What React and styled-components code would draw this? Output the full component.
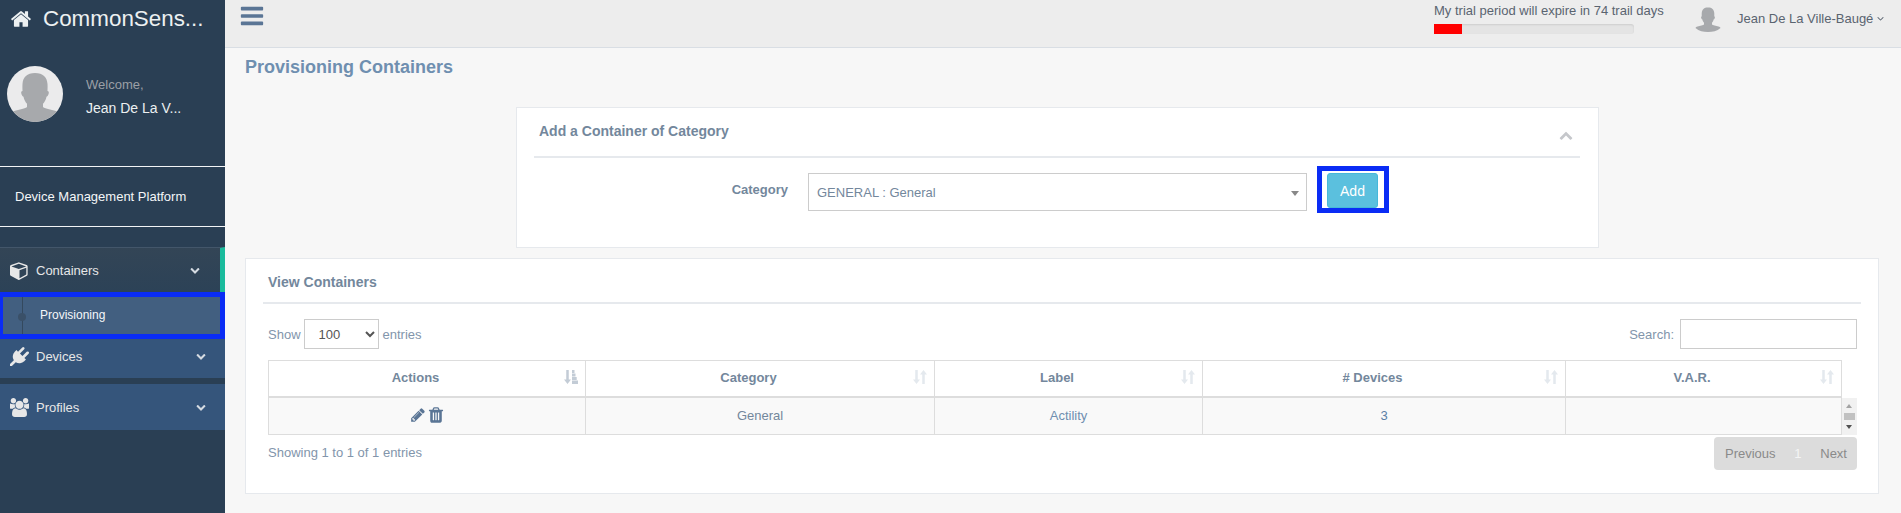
import React from "react";
import styled, { createGlobalStyle } from "styled-components";

const PATHS = {
  home: "M1472 992v480q0 26-19 45t-45 19h-384v-384h-256v384h-384q-26 0-45-19t-19-45v-480q0-1 .5-3t.5-3l575-474 575 474q1 2 1 6zm223-69l-62 74q-8 9-21 11h-3q-13 0-21-7l-692-577-692 577q-12 8-24 7-13-2-21-11l-62-74q-8-10-7-23.5t11-21.5l719-599q32-26 76-26t76 26l244 204v-195q0-14 9-23t23-9h192q14 0 23 9t9 23v408l219 182q10 8 11 21.5t-7 23.5z",
  cube: "M896 1629l640-349v-636l-640 233v752zm-64-865l698-254-698-254-698 254zm832-252v768q0 35-18 65t-49 47l-704 384q-28 16-61 16t-61-16l-704-384q-31-17-49-47t-18-65v-768q0-40 23-73t61-50l704-256q22-8 44-8t44 8l704 256q38 17 61 50t23 73z",
  plug: "M1755 453q37 38 37 90.5t-37 90.5l-401 400 150 150-160 160q-163 163-389.5 186.5t-411.5-100.5l-362 362h-181v-181l362-362q-124-185-100.5-411.5t186.5-389.5l160-160 150 150 400-401q38-37 91-37t90 37 37 90.5-37 90.5l-400 401 234 234 401-400q38-37 91-37t90 37z",
  users: "M529 896q-162 5-265 128h-134q-82 0-138-40.5t-56-118.5q0-353 124-353 6 0 43.5 21t97.5 42.5 119 21.5q67 0 133-23-5 37-5 66 0 139 81 256zm1071 637q0 120-73 189.5t-194 69.5h-874q-121 0-194-69.5t-73-189.5q0-53 3.5-103.5t14-109 26.5-108.5 43-97.5 62-81 85.5-53.5 111.5-20q10 0 43 21.5t73 48 107 48 135 21.5 135-21.5 107-48 73-48 43-21.5q61 0 111.5 20t85.5 53.5 62 81 43 97.5 26.5 108.5 14 109 3.5 103.5zm-1024-1277q0 106-75 181t-181 75-181-75-75-181 75-181 181-75 181 75 75 181zm704 384q0 159-112.5 271.5t-271.5 112.5-271.5-112.5-112.5-271.5 112.5-271.5 271.5-112.5 271.5 112.5 112.5 271.5zm576 225q0 78-56 118.5t-138 40.5h-134q-103-123-265-128 81-117 81-256 0-29-5-66 66 23 133 23 59 0 119-21.5t97.5-42.5 43.5-21q124 0 124 353zm-128-609q0 106-75 181t-181 75-181-75-75-181 75-181 181-75 181 75 75 181z",
  pencil: "M491 1536l91-91-235-235-91 91v107h128v128h107zm523-928q0-22-22-22-10 0-17 7l-542 542q-7 7-7 17 0 22 22 22 10 0 17-7l542-542q7-7 7-17zm-54-192l416 416-832 832h-416v-416zm683 96q0 53-37 90l-166 166-416-416 166-165q36-38 90-38 53 0 91 38l235 234q37 39 37 91z",
  trash: "M704 1376v-704q0-14-9-23t-23-9h-64q-14 0-23 9t-9 23v704q0 14 9 23t23 9h64q14 0 23-9t9-23zm256 0v-704q0-14-9-23t-23-9h-64q-14 0-23 9t-9 23v704q0 14 9 23t23 9h64q14 0 23-9t9-23zm256 0v-704q0-14-9-23t-23-9h-64q-14 0-23 9t-9 23v704q0 14 9 23t23 9h64q14 0 23-9t9-23zm-544-992h448l-48-117q-7-9-17-11h-317q-10 2-17 11zm928 32v64q0 14-9 23t-23 9h-96v948q0 83-47 143.5t-113 60.5h-832q-66 0-113-58.5t-47-141.5v-952h-96q-14 0-23-9t-9-23v-64q0-14 9-23t23-9h309l70-167q15-37 54-63t79-26h320q40 0 79 26t54 63l70 167h309q14 0 23 9t9 23z",
  bars: "M1664 1344v128q0 26-19 45t-45 19h-1408q-26 0-45-19t-19-45v-128q0-26 19-45t45-19h1408q26 0 45 19t19 45zm0-512v128q0 26-19 45t-45 19h-1408q-26 0-45-19t-19-45v-128q0-26 19-45t45-19h1408q26 0 45 19t19 45zm0-512v128q0 26-19 45t-45 19h-1408q-26 0-45-19t-19-45v-128q0-26 19-45t45-19h1408q26 0 45 19t19 45z",
  chevronDown: "M1683 808l-742 741q-19 19-45 19t-45-19l-742-741q-19-19-19-45.5t19-45.5l166-165q19-19 45-19t45 19l531 531 531-531q19-19 45-19t45 19l166 165q19 19 19 45.5t-19 45.5z",
  chevronUp: "M1683 1331l-166 165q-19 19-45 19t-45-19l-531-530-531 530q-19 19-45 19t-45-19l-166-165q-19-19-19-45.5t19-45.5l742-741q19-19 45-19t45 19l742 741q19 19 19 45.5t-19 45.5z",
  angleDown: "M1395 736q0 13-10 23l-466 466q-10 10-23 10t-23-10l-466-466q-10-10-10-23t10-23l50-50q10-10 23-10t23 10l393 393 393-393q10-10 23-10t23 10l50 50q10 10 10 23z",
};

const FaIcon = ({ name, size, color }) => (
  <svg width={size} height={size} viewBox="0 0 1792 1792" fill={color} style={{ display: "block", flex: "none" }}>
    <path d={PATHS[name]} />
  </svg>
);

const Silhouette = ({ size, round }) => (
  <svg
    width={size}
    height={size}
    viewBox="0 0 56 56"
    style={{ display: "block", flex: "none", borderRadius: round ? "50%" : 0, background: round ? "#ebebec" : "none" }}
  >
    <path
      fill="#a7a9ac"
      d="M28 7C20 7 16 11 15.500 18C15.300 21 15.500 23 15.500 25C14.300 25 14 26 14.300 27.500C14.600 29 15.300 30.500 16.500 30.700C17.100 33.700 18.500 36.200 20 37.700V41C19 42.500 12 43.500 7 45C5 45.600 3.500 46.700 3 48C10 54 18.500 56 28 56C37.500 56 46 54 53 48C52.500 46.700 51 45.600 49 45C44 43.500 37 42.500 36 41V37.700C37.500 36.200 38.900 33.700 39.500 30.700C40.700 30.500 41.400 29 41.700 27.500C42 26 41.700 25 40.500 25C40.500 23 40.700 21 40.500 18C40 11 36 7 28 7z"
    />
  </svg>
);

// sort arrows of the table header, "amount" is the sorted variant
const SortIcon = ({ amount }) => (
  <svg width="14" height="14" viewBox="0 0 14 14" fill={amount ? "#c3ccd6" : "#e4e9ee"} style={{ display: "block", flex: "none" }}>
    <path d="M2.250 0h2.500v9.500H7L3.500 14 0 9.500h2.250z" />
    {amount ? (
      <path d="M8 0h2.500v3H8zM8 3.500h3.500v3H8zM8 7h4.700v3H8zM8 10.500h6V14H8z" />
    ) : (
      <path d="M9.250 14h2.500V4.500H14L10.500 0 7 4.500h2.250z" />
    )}
  </svg>
);

const GlobalStyle = createGlobalStyle`
  html, body {
    margin: 0;
    height: 513px;
    overflow: hidden;
    background: #f7f7f7;
  }
  * {
    box-sizing: border-box;
  }
`;

const Shell = styled.div`
  display: flex;
  width: 1901px;
  height: 513px;
  font-family: "Liberation Sans", Arial, sans-serif;
  font-size: 13px;
  color: #73879c;
`;

/* Sidebar */

const Sidebar = styled.aside`
  width: 225px;
  flex: none;
  background: #2a3f54;
  color: #ecf0f1;
`;

const Brand = styled.div`
  height: 37px;
  padding-left: 10px;
  display: flex;
  align-items: center;
  gap: 11px;
  font-size: 22.400px;
  color: #ecf0f1;
`;

const Profile = styled.div`
  margin-top: 29px;
  padding-left: 7px;
  display: flex;
  align-items: center;
  gap: 23px;
`;

const ProfileText = styled.div`
  margin-top: 4px;
`;

const Welcome = styled.div`
  font-size: 13px;
  color: #9b9fa6;
  margin-bottom: 8px;
`;

const ProfileName = styled.div`
  font-size: 14px;
  line-height: 16px;
  color: #ecf0f1;
`;

const PlatformLabel = styled.div`
  margin-top: 44px;
  height: 61px;
  padding-left: 15px;
  display: flex;
  align-items: center;
  border-top: 1px solid #f2f4f6;
  border-bottom: 1px solid #f2f4f6;
  font-size: 13px;
  color: #f4f6f8;
`;

const Menu = styled.nav`
  margin-top: 20px;
  display: flex;
  flex-direction: column;
`;

const MenuRow = styled.div`
  display: flex;
  align-items: center;
  height: ${(p) => p.$height}px;
  margin-bottom: ${(p) => p.$gap || 0}px;
  padding: 0 ${(p) => (p.$active ? 20 : 19)}px ${(p) => p.$lift || 0}px 10px;
  background: ${(p) => (p.$active ? "linear-gradient(#334556, #2c4257)" : "#35557b")};
  border-top: ${(p) => (p.$active ? "1px solid #43566a" : "none")};
  border-right: ${(p) => (p.$active ? "5px solid #1abb9c" : "none")};
  color: #e7e7e7;
  font-size: 13px;
`;

const MenuLabel = styled.span`
  flex: 1;
  margin-left: 7px;
`;

const SubRow = styled.div`
  position: relative;
  height: 47px;
  padding: 0 0 2px 37px;
  display: flex;
  align-items: center;
  background: #425f80;
  border: solid #0a2cf5;
  border-width: 5px 5px 5px 3px;
  font-size: 12px;
  color: #f5f7fa;
`;

const SubLine = styled.span`
  position: absolute;
  left: 19px;
  top: 0;
  bottom: 0;
  width: 1px;
  background: #34495e;
`;

const SubDot = styled.span`
  position: absolute;
  left: 15px;
  top: 16px;
  width: 8px;
  height: 8px;
  border-radius: 50%;
  background: #3a5068;
`;

/* Top bar */

const Main = styled.main`
  flex: 1;
  min-width: 0;
  display: flex;
  flex-direction: column;
`;

const TopBar = styled.header`
  height: 48px;
  flex: none;
  padding-left: 14px;
  display: flex;
  background: #ededed;
  border-bottom: 1px solid #d9dee4;
`;

const MenuToggle = styled.div`
  margin-top: 3px;
  height: 28px;
`;

const Trial = styled.div`
  margin-left: 1169px;
  margin-top: 3px;
  width: 260px;
`;

const TrialText = styled.div`
  font-size: 13px;
  line-height: 16px;
  color: #5a6470;
`;

const Progress = styled.div`
  width: 200px;
  height: 10px;
  margin-top: 5px;
  background: #e4e4e4;
  border-radius: 0 3px 3px 0;
  box-shadow: inset 0 1px 2px rgba(0, 0, 0, 0.1);
`;

const ProgressFill = styled.div`
  height: 100%;
  background: #ff0000;
`;

const UserBox = styled.div`
  display: flex;
  align-items: center;
  height: 36px;
  gap: 15px;
  font-size: 13px;
  color: #5a6470;
`;

const UserName = styled.span`
  display: flex;
  align-items: center;
  gap: 2px;
`;

/* Content */

const Content = styled.div`
  flex: 1;
  padding: 0 22px 0 20px;
`;

const PageTitle = styled.h3`
  margin: 0;
  padding-top: 8px;
  height: 59px;
  font-size: 18px;
  line-height: 22px;
  font-weight: 700;
  color: #6f8fb0;
`;

const Panel = styled.section`
  background: #fff;
  border: 1px solid #e6e9ed;
  padding: ${(p) => p.$padding};
  margin: 0 0 ${(p) => p.$bottom || 0}px ${(p) => p.$left || 0}px;
  width: ${(p) => p.$width}px;
  height: ${(p) => p.$height}px;
`;

const PanelHead = styled.div`
  display: flex;
  align-items: center;
  justify-content: space-between;
  border-bottom: 2px solid #e6e9ed;
  height: ${(p) => p.$height}px;
  padding: ${(p) => p.$padding};
  font-size: 14px;
  font-weight: 700;
  color: #73879c;
`;

const CollapseIcon = styled.span`
  margin-top: 8px;
`;

const FormRow = styled.div`
  display: flex;
  align-items: flex-start;
  margin-top: 15px;
`;

const FieldLabel = styled.label`
  width: 274px;
  padding: 9px 20px 0 0;
  text-align: right;
  font-size: 13px;
  font-weight: 700;
  color: #73879c;
`;

const FakeSelect = styled.div`
  position: relative;
  width: 499px;
  height: 38px;
  padding: 0 8px;
  display: flex;
  align-items: center;
  border: 1px solid #ccc;
  font-size: 13px;
  color: #73879c;
`;

const Caret = styled.span`
  position: absolute;
  right: 7px;
  top: 17px;
  border-style: solid;
  border-width: 5px 4px 0 4px;
  border-color: #888 transparent transparent transparent;
`;

const AddFrame = styled.div`
  margin: -7px 0 0 10px;
  padding: 2px 6px 0 5px;
  border: 5px solid #0a2cf5;
`;

const AddButton = styled.button`
  display: block;
  width: 51px;
  height: 35px;
  padding: 0;
  font: 14px "Liberation Sans", Arial, sans-serif;
  color: #fff;
  background: #5bc0de;
  border: 1px solid #46b8da;
  border-radius: 3px;
`;

const Controls = styled.div`
  display: flex;
  align-items: center;
  justify-content: space-between;
  margin: 15px 4px 11px 5px;
  height: 30px;
  font-size: 13px;
  color: #8295ab;
`;

const ControlGroup = styled.label`
  display: flex;
  align-items: center;
  gap: ${(p) => p.$gap}px;
`;

const LengthSelect = styled.select`
  width: 75px;
  height: 30px;
  margin-right: 1px;
  padding: 0 10px;
  background: #fff;
  border: 1px solid #ccc;
  font: 13px "Liberation Sans", Arial, sans-serif;
  color: #555;
`;

const SearchInput = styled.input`
  width: 177px;
  height: 30px;
  background: #fff;
  border: 1px solid #ccc;
  padding: 0;
`;

const TableRow = styled.div`
  display: flex;
  align-items: flex-end;
  margin-left: 5px;
`;

const Table = styled.table`
  width: 1573px;
  flex: none;
  table-layout: fixed;
  border-collapse: collapse;
  font-size: 13px;
`;

const Th = styled.th`
  position: relative;
  width: ${(p) => p.$width}px;
  height: 36px;
  padding: 0 23px 2px 0;
  text-align: center;
  font-weight: 700;
  color: #73879c;
  border: 1px solid #ddd;
  border-bottom-width: 2px;
`;

const SortSlot = styled.span`
  position: absolute;
  right: 7px;
  top: 9px;
`;

const Td = styled.td`
  height: 38px;
  padding: 0;
  text-align: center;
  background: #f9f9f9;
  border: 1px solid #ddd;
  color: ${(p) => p.$color || "#73879c"};
`;

const ActionIcons = styled.span`
  display: inline-flex;
  align-items: center;
  justify-content: center;
  gap: 1px;
`;

const ScrollTrack = styled.div`
  position: relative;
  width: 15px;
  height: 37px;
  flex: none;
  background: #f1f1f1;
`;

const ScrollUp = styled.span`
  position: absolute;
  left: 4px;
  top: 6px;
  border-style: solid;
  border-width: 0 3.500px 4px 3.500px;
  border-color: transparent transparent #a3a3a3 transparent;
`;

const ScrollThumb = styled.span`
  position: absolute;
  left: 2px;
  top: 15px;
  width: 11px;
  height: 7px;
  background: #c1c1c1;
`;

const ScrollDown = styled.span`
  position: absolute;
  left: 4px;
  bottom: 6px;
  border-style: solid;
  border-width: 4px 3.500px 0 3.500px;
  border-color: #505050 transparent transparent transparent;
`;

const Footer = styled.div`
  display: flex;
  align-items: flex-start;
  justify-content: space-between;
  margin: 2px 4px 0 5px;
`;

const Info = styled.div`
  padding-top: 8px;
  font-size: 13px;
  line-height: 15px;
  color: #8295ab;
`;

const Pagination = styled.div`
  display: flex;
  align-items: center;
  justify-content: space-between;
  width: 143px;
  height: 33px;
  padding: 0 10px 0 11px;
  background: #dcdcdc;
  border-radius: 4px;
  font-size: 13px;
  color: #8a8a8a;
`;

const PageCurrent = styled.span`
  color: #f4f4f4;
`;

const columns = [
  { label: "Actions", width: 317, amount: true },
  { label: "Category", width: 349 },
  { label: "Label", width: 268 },
  { label: "# Devices", width: 363 },
  { label: "V.A.R.", width: 276 },
];

const App = () => {
  return (
    <Shell>
      <GlobalStyle />
      <Sidebar>
        <Brand>
          <FaIcon name="home" size={22} color="#ecf0f1" />
          CommonSens...
        </Brand>
        <Profile>
          <Silhouette size={56} round />
          <ProfileText>
            <Welcome>Welcome,</Welcome>
            <ProfileName>Jean De La V...</ProfileName>
          </ProfileText>
        </Profile>
        <PlatformLabel>Device Management Platform</PlatformLabel>
        <Menu>
          <MenuRow $active $height={45}>
            <FaIcon name="cube" size={19} color="#e7e7e7" />
            <MenuLabel>Containers</MenuLabel>
            <FaIcon name="chevronDown" size={10} color="#d5dbe2" />
          </MenuRow>
          <SubRow>
            <SubLine />
            <SubDot />
            Provisioning
          </SubRow>
          <MenuRow $height={39} $gap={6} $lift={5}>
            <FaIcon name="plug" size={19} color="#e7e7e7" />
            <MenuLabel>Devices</MenuLabel>
            <FaIcon name="chevronDown" size={10} color="#d5dbe2" />
          </MenuRow>
          <MenuRow $height={46}>
            <FaIcon name="users" size={19} color="#e7e7e7" />
            <MenuLabel>Profiles</MenuLabel>
            <FaIcon name="chevronDown" size={10} color="#d5dbe2" />
          </MenuRow>
        </Menu>
      </Sidebar>

      <Main>
        <TopBar>
          <MenuToggle>
            <FaIcon name="bars" size={26} color="#5a7595" />
          </MenuToggle>
          <Trial>
            <TrialText>My trial period will expire in 74 trail days</TrialText>
            <Progress>
              <ProgressFill style={{ width: `${(28 / 200) * 100}%` }} />
            </Progress>
          </Trial>
          <UserBox>
            <Silhouette size={28} />
            <UserName>
              Jean De La Ville-Baugé
              <FaIcon name="angleDown" size={11} color="#5a6470" />
            </UserName>
          </UserBox>
        </TopBar>

        <Content>
          <PageTitle>Provisioning Containers</PageTitle>

          <Panel $left={271} $width={1083} $height={141} $bottom={10} $padding="0 18px 0 17px">
            <PanelHead $height={50} $padding="0 7px 2px 5px">
              Add a Container of Category
              <CollapseIcon>
                <FaIcon name="chevronUp" size={14} color="#c5c7cb" />
              </CollapseIcon>
            </PanelHead>
            <FormRow>
              <FieldLabel>Category</FieldLabel>
              <FakeSelect>
                GENERAL : General
                <Caret />
              </FakeSelect>
              <AddFrame>
                <AddButton>Add</AddButton>
              </AddFrame>
            </FormRow>
          </Panel>

          <Panel $width={1634} $height={236} $padding="0 17px 0 17px">
            <PanelHead $height={45} $padding="2px 0 0 5px">View Containers</PanelHead>
            <Controls>
              <ControlGroup $gap={3}>
                Show
                <LengthSelect defaultValue="100">
                  <option>100</option>
                </LengthSelect>
                entries
              </ControlGroup>
              <ControlGroup $gap={6}>
                Search:
                <SearchInput />
              </ControlGroup>
            </Controls>
            <TableRow>
              <Table>
                <thead>
                  <tr>
                    {columns.map((col) => (
                      <Th key={col.label} $width={col.width}>
                        {col.label}
                        <SortSlot>
                          <SortIcon amount={col.amount} />
                        </SortSlot>
                      </Th>
                    ))}
                  </tr>
                </thead>
                <tbody>
                  <tr>
                    <Td>
                      <ActionIcons>
                        <FaIcon name="pencil" size={16} color="#5a7595" />
                        <FaIcon name="trash" size={18} color="#5a7595" />
                      </ActionIcons>
                    </Td>
                    <Td>General</Td>
                    <Td $color="#6f8fb0">Actility</Td>
                    <Td $color="#5a7fa6">3</Td>
                    <Td />
                  </tr>
                </tbody>
              </Table>
              <ScrollTrack>
                <ScrollUp />
                <ScrollThumb />
                <ScrollDown />
              </ScrollTrack>
            </TableRow>
            <Footer>
              <Info>Showing 1 to 1 of 1 entries</Info>
              <Pagination>
                <span>Previous</span>
                <PageCurrent>1</PageCurrent>
                <span>Next</span>
              </Pagination>
            </Footer>
          </Panel>
        </Content>
      </Main>
    </Shell>
  );
};

export default App;
